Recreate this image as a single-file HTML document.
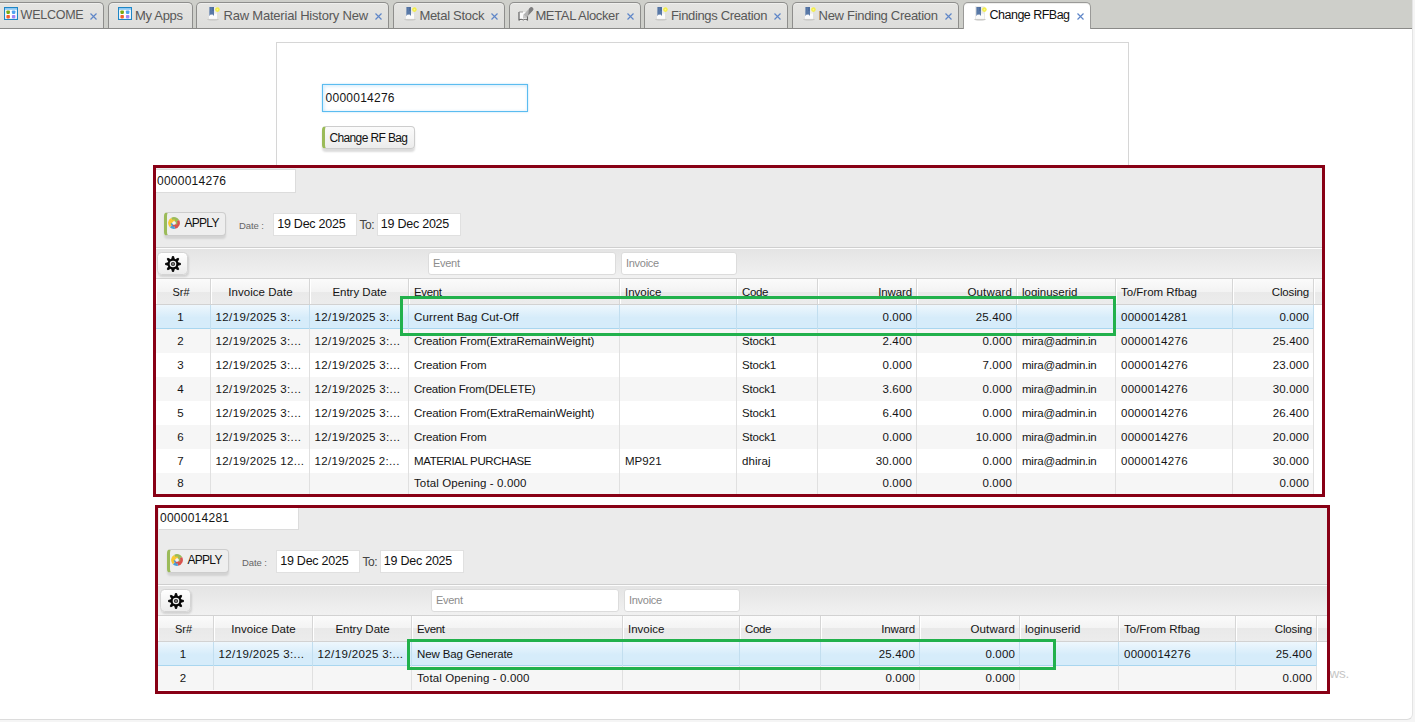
<!DOCTYPE html>
<html><head><meta charset="utf-8"><title>Change RFBag</title>
<style>
html,body{margin:0;padding:0}
body{width:1415px;height:722px;overflow:hidden;background:#f5f5f5;font-family:"Liberation Sans",sans-serif;font-size:12px;color:#141414;position:relative}
#page{position:absolute;left:0;top:0;width:1412px;height:719px;background:#fff;border-right:1px solid #e4e4e4;border-bottom:1px solid #dcdcdc;border-bottom-right-radius:6px;overflow:hidden;box-sizing:content-box}
#tabbar{position:absolute;left:0;top:0;width:1412px;height:28px;background:#cecfca;border-bottom:1px solid #8a8a88}
.tab{position:absolute;top:2px;height:26px;box-sizing:border-box;border:1px solid #8e8e8c;border-bottom:none;border-radius:5px 5px 0 0;background:linear-gradient(#e5e5e2,#dddddb);box-shadow:inset 0 1px 0 #efefed;color:#585858;font-size:13px;white-space:nowrap}
.tab.act{background:#fff;height:27px;color:#111;border-color:#9a9a98}
.tab .ti{position:absolute;left:9px;top:4px}
.tab .ti.doc{left:10px;top:3px}
.tab .ti.edit{left:8px;top:3px}
.tab .tl{position:absolute;top:5px;line-height:15px}
.tab .tx{position:absolute;right:6px;top:9.5px}
#formbox{position:absolute;left:276px;top:42px;width:851px;height:140px;border:1px solid #d6d6d6;background:#fff}
.rfin{position:absolute;left:45px;top:41px;width:201.4px;height:26px;border:1px solid #5bbcf0;box-shadow:inset 2px 2px 3px rgba(110,185,240,.22),inset -1px -1px 2px rgba(110,185,240,.12),0 0 2px rgba(91,188,240,.45);line-height:26px;padding-left:2.6px;box-sizing:content-box;letter-spacing:.24px}
.rfbtn{position:absolute;left:45px;top:82.6px;width:92.6px;height:23.8px;box-sizing:border-box;border:1px solid #cdcdcd;border-left:3.5px solid #9bbb59;border-radius:4px;background:linear-gradient(#fbfbfb,#ececec);box-shadow:0 3px 2px rgba(0,0,0,.14);line-height:23px;text-align:left;padding-left:4.4px;white-space:nowrap;letter-spacing:-0.62px;color:#111}
.panel{position:absolute;background:#ebebeb;overflow:hidden}
.pin{position:absolute;top:0;width:1166px;height:100%}
.bagin{position:absolute;left:0;top:1px;width:138px;height:22px;border:1px solid #dcdcdc;border-left:none;background:#fff;line-height:22px;padding-left:1px;letter-spacing:.25px;font-size:12px}
.apply{position:absolute;left:8px;top:44px;width:62.4px;height:24px;box-sizing:border-box;border:1px solid #cdcdcd;border-left:3.5px solid #9bbb59;border-radius:4px;background:#eeeeee;box-shadow:0 3px 2px rgba(0,0,0,.10)}
.apply .swirl{position:absolute;left:0.6px;top:4.2px}
.apply span{position:absolute;left:17.4px;top:-0.8px;line-height:22px;letter-spacing:-0.68px;color:#111}
.dlabel{position:absolute;left:83px;top:51.5px;font-size:9.5px;line-height:12px;color:#666;letter-spacing:-0.1px}
.tolabel{position:absolute;left:203.6px;top:49.5px;font-size:12px;line-height:14px;color:#444;letter-spacing:-0.5px}
.din{position:absolute;top:45px;width:83.6px;height:22.6px;background:#fff;border:1px solid #e0e0e0;box-sizing:border-box;line-height:20.4px;padding-left:3.2px;font-size:12.5px;letter-spacing:-0.24px;color:#111}
.d1{left:117px}.d2{left:220.6px;width:84.6px}
.sep{position:absolute;left:0;top:79px;width:100%;height:1px;background:#cfcfcf;border-bottom:1px solid #fdfdfd}
.toolbar{position:absolute;left:0;top:81px;width:100%;height:29px;background:linear-gradient(#e4e4e4,#f1f1f1)}
.gearbtn{position:absolute;left:0.6px;top:83.7px;width:31.5px;height:23.3px;box-sizing:border-box;border:1px solid #d4d4d4;border-radius:4.5px;background:linear-gradient(#ffffff,#ececec);box-shadow:1px 2px 2px rgba(0,0,0,.12)}
.gearbtn .gear{position:absolute;left:7.3px;top:2.9px}
.filt{position:absolute;top:83.8px;height:22.8px;box-sizing:border-box;border:1px solid #dcdcdc;border-radius:3px;background:#fff;color:#8c8c8c;line-height:20px;padding-left:4px;font-size:11px;letter-spacing:-0.28px}
.f1{left:272px;width:188px}.f2{left:465px;width:116px}
.hdr{position:absolute;left:0;top:110px;width:100%;height:27px;background:linear-gradient(#fbfbfb 0,#f3f3f3 50%,#e9e9e9 50%,#ececec 100%);border-top:1px solid #d2d2d2;border-bottom:1px solid #d2d2d2;box-sizing:border-box}
.hc{font-size:11.5px;position:absolute;top:0;height:25px;box-sizing:border-box;border-left:1px solid #fff;border-right:1px solid #d6d6d6;line-height:27px;white-space:nowrap;overflow:hidden}

.hc.al{text-align:left;padding-left:4px}
.c.al{text-align:left;padding-left:5px}
.c.dt{text-align:left;padding-left:4.6px}
.hc.ar,.c.ar{text-align:right;padding-right:4px}
.hc.ac,.c.ac{text-align:center}
.row{position:absolute;left:0;height:24px;background:#fff}
.p1 .row.last .c{line-height:21.6px}
.row.alt{background:#f6f6f6}
.row.sel{background:linear-gradient(#eef7fd 0,#d6ecfa 55%,#d6ecfa 100%);border-bottom:1px solid #a9d6ef;box-sizing:border-box}
.c{font-size:11.5px;position:absolute;top:0;height:24px;box-sizing:border-box;border-right:1px solid #e0e0e0;line-height:24px;white-space:nowrap;overflow:hidden}
.pb{position:absolute;border:3px solid #880015;box-sizing:border-box;pointer-events:none}
.pb1{left:153px;top:165px;width:1172px;height:332px}
.pb2{left:155px;top:505px;width:1175px;height:189px}
.gr{position:absolute;border:3px solid #22b14c;box-sizing:border-box}
.gr1{left:400px;top:296px;width:716px;height:40px}
.gr2{left:407px;top:639px;width:649px;height:31px}
.wm{position:absolute;left:1329.5px;top:665.5px;font-size:13.5px;color:#c6c6c6;letter-spacing:-0.2px}
.rowsbg{position:absolute;left:0;top:137px;width:100%;bottom:0;background:#fff}
.row.sel .c{border-right-color:#c2deef}

</style></head><body>
<div id="page">
<div id="tabbar">
<div class="tab" style="left:-6px;width:110px"><svg class="ti" viewBox="0 0 14 13" width="14" height="13"><rect x="0.5" y="0.5" width="13" height="12" fill="#fff" stroke="#1e86c5" stroke-width="1.2"/><rect x="1" y="1" width="12" height="1.8" fill="#8dc8f3"/><rect x="2.4" y="3.4" width="3.5" height="3.5" rx=".8" fill="#7cab12"/><rect x="7.9" y="3.4" width="3.5" height="3.5" rx=".8" fill="#4ea4ef"/><rect x="2.4" y="7.9" width="3.5" height="3.5" rx=".8" fill="#f1622f"/><rect x="7.9" y="7.9" width="3.5" height="3.5" rx=".8" fill="#a185f6"/></svg><span class="tl" style="left:25.6px;font-size:12.5px;letter-spacing:-0.25px">WELCOME</span><svg class="tx" viewBox="0 0 7 7" width="7" height="7"><path d="M0.5 0.5L6.5 6.5M6.5 0.5L0.5 6.5" stroke="#5f86c8" stroke-width="1.2" fill="none"/></svg></div>
<div class="tab" style="left:108px;width:85px"><svg class="ti" viewBox="0 0 14 13" width="14" height="13"><rect x="0.5" y="0.5" width="13" height="12" fill="#fff" stroke="#1e86c5" stroke-width="1.2"/><rect x="1" y="1" width="12" height="1.8" fill="#8dc8f3"/><rect x="2.4" y="3.4" width="3.5" height="3.5" rx=".8" fill="#7cab12"/><rect x="7.9" y="3.4" width="3.5" height="3.5" rx=".8" fill="#4ea4ef"/><rect x="2.4" y="7.9" width="3.5" height="3.5" rx=".8" fill="#f1622f"/><rect x="7.9" y="7.9" width="3.5" height="3.5" rx=".8" fill="#a185f6"/></svg><span class="tl" style="left:26.0px;letter-spacing:-0.31px">My Apps</span></div>
<div class="tab" style="left:196px;width:193px"><svg class="ti doc" viewBox="0 0 14 15" width="14" height="15"><ellipse cx="6" cy="13.6" rx="6" ry="0.9" fill="#c4c4c2"/><rect x="1.6" y="0.8" width="8.8" height="12.2" fill="#ececea" stroke="#dededc" stroke-width=".5"/><rect x="2" y="7.6" width="8" height="5.2" fill="#fbfbfb"/><path d="M2.4 1h4.6v8.9l-1.100-1.300h-2.400l-1.100 1.300z" fill="#4f6f9f"/><path d="M2.400 5h4.600v4.900l-1.100-1.300h-2.400l-1.100 1.300z" fill="#7291bb" opacity=".3"/><path d="M3.400 1.400h1.600v3.600h-1.600z" fill="#6483b3" opacity=".6"/><circle cx="10.4" cy="3.600" r="2.300" fill="#f3ee48"/><circle cx="10.4" cy="3.600" r="0.900" fill="#fbf88a"/></svg><span class="tl" style="left:26.6px;letter-spacing:-0.22px">Raw Material History New</span><svg class="tx" viewBox="0 0 7 7" width="7" height="7"><path d="M0.5 0.5L6.5 6.5M6.5 0.5L0.5 6.5" stroke="#5f86c8" stroke-width="1.2" fill="none"/></svg></div>
<div class="tab" style="left:393px;width:112px"><svg class="ti doc" viewBox="0 0 14 15" width="14" height="15"><ellipse cx="6" cy="13.6" rx="6" ry="0.9" fill="#c4c4c2"/><rect x="1.6" y="0.8" width="8.8" height="12.2" fill="#ececea" stroke="#dededc" stroke-width=".5"/><rect x="2" y="7.6" width="8" height="5.2" fill="#fbfbfb"/><path d="M2.4 1h4.6v8.9l-1.100-1.300h-2.400l-1.100 1.300z" fill="#4f6f9f"/><path d="M2.400 5h4.600v4.900l-1.100-1.300h-2.400l-1.100 1.300z" fill="#7291bb" opacity=".3"/><path d="M3.400 1.400h1.600v3.600h-1.600z" fill="#6483b3" opacity=".6"/><circle cx="10.4" cy="3.600" r="2.300" fill="#f3ee48"/><circle cx="10.4" cy="3.600" r="0.900" fill="#fbf88a"/></svg><span class="tl" style="left:25.4px;letter-spacing:-0.29px">Metal Stock</span><svg class="tx" viewBox="0 0 7 7" width="7" height="7"><path d="M0.5 0.5L6.5 6.5M6.5 0.5L0.5 6.5" stroke="#5f86c8" stroke-width="1.2" fill="none"/></svg></div>
<div class="tab" style="left:509px;width:132px"><svg class="ti edit" viewBox="0 0 16 15" width="16" height="15"><rect x="1" y="6" width="8.4" height="8.4" fill="#fbfbfb"/><path d="M1 6v8.6M9.4 9v5.6" stroke="#6a6a6a" stroke-width="1.3" fill="none"/><path d="M1 14c1.5-.9 2.8-.9 4.2 0c1.400-.9 2.800-.9 4.200 0" stroke="#555" stroke-width="1" fill="none"/><path d="M1 6h4" stroke="#888" stroke-width=".8"/><path d="M5.600 8.600l6.400-6.800a1.800 1.800 0 012.800 2.600l-6 6.800-3.600 1.200z" fill="#b4b4b4"/><path d="M11 2.800l1-1a1.800 1.800 0 012.800 2.600l-4.600 5.200z" fill="#7e7e7e"/><path d="M5.600 8.600l3.200 2.600-3.600 1.200z" fill="#c9c9c9"/></svg><span class="tl" style="left:25.4px;letter-spacing:-0.35px">METAL Alocker</span><svg class="tx" viewBox="0 0 7 7" width="7" height="7"><path d="M0.5 0.5L6.5 6.5M6.5 0.5L0.5 6.5" stroke="#5f86c8" stroke-width="1.2" fill="none"/></svg></div>
<div class="tab" style="left:644px;width:144px"><svg class="ti doc" viewBox="0 0 14 15" width="14" height="15"><ellipse cx="6" cy="13.6" rx="6" ry="0.9" fill="#c4c4c2"/><rect x="1.6" y="0.8" width="8.8" height="12.2" fill="#ececea" stroke="#dededc" stroke-width=".5"/><rect x="2" y="7.6" width="8" height="5.2" fill="#fbfbfb"/><path d="M2.4 1h4.6v8.9l-1.100-1.300h-2.400l-1.100 1.300z" fill="#4f6f9f"/><path d="M2.400 5h4.600v4.900l-1.100-1.300h-2.400l-1.100 1.300z" fill="#7291bb" opacity=".3"/><path d="M3.400 1.400h1.600v3.600h-1.600z" fill="#6483b3" opacity=".6"/><circle cx="10.4" cy="3.600" r="2.300" fill="#f3ee48"/><circle cx="10.4" cy="3.600" r="0.900" fill="#fbf88a"/></svg><span class="tl" style="left:26.0px;letter-spacing:-0.34px">Findings Creation</span><svg class="tx" viewBox="0 0 7 7" width="7" height="7"><path d="M0.5 0.5L6.5 6.5M6.5 0.5L0.5 6.5" stroke="#5f86c8" stroke-width="1.2" fill="none"/></svg></div>
<div class="tab" style="left:792px;width:167px"><svg class="ti doc" viewBox="0 0 14 15" width="14" height="15"><ellipse cx="6" cy="13.6" rx="6" ry="0.9" fill="#c4c4c2"/><rect x="1.6" y="0.8" width="8.8" height="12.2" fill="#ececea" stroke="#dededc" stroke-width=".5"/><rect x="2" y="7.6" width="8" height="5.2" fill="#fbfbfb"/><path d="M2.4 1h4.6v8.9l-1.100-1.300h-2.400l-1.100 1.300z" fill="#4f6f9f"/><path d="M2.400 5h4.600v4.900l-1.100-1.300h-2.400l-1.100 1.300z" fill="#7291bb" opacity=".3"/><path d="M3.400 1.400h1.600v3.600h-1.600z" fill="#6483b3" opacity=".6"/><circle cx="10.4" cy="3.600" r="2.300" fill="#f3ee48"/><circle cx="10.4" cy="3.600" r="0.900" fill="#fbf88a"/></svg><span class="tl" style="left:25.6px;letter-spacing:-0.30px">New Finding Creation</span><svg class="tx" viewBox="0 0 7 7" width="7" height="7"><path d="M0.5 0.5L6.5 6.5M6.5 0.5L0.5 6.5" stroke="#5f86c8" stroke-width="1.2" fill="none"/></svg></div>
<div class="tab act" style="left:963px;width:128px"><svg class="ti doc" viewBox="0 0 14 15" width="14" height="15"><ellipse cx="6" cy="13.6" rx="6" ry="0.9" fill="#c4c4c2"/><rect x="1.6" y="0.8" width="8.8" height="12.2" fill="#ececea" stroke="#dededc" stroke-width=".5"/><rect x="2" y="7.6" width="8" height="5.2" fill="#fbfbfb"/><path d="M2.4 1h4.6v8.9l-1.100-1.300h-2.400l-1.100 1.300z" fill="#4f6f9f"/><path d="M2.400 5h4.600v4.900l-1.100-1.300h-2.400l-1.100 1.300z" fill="#7291bb" opacity=".3"/><path d="M3.400 1.400h1.600v3.600h-1.600z" fill="#6483b3" opacity=".6"/><circle cx="10.4" cy="3.600" r="2.300" fill="#f3ee48"/><circle cx="10.4" cy="3.600" r="0.900" fill="#fbf88a"/></svg><span class="tl" style="left:25.6px;font-size:12.5px;letter-spacing:-0.52px">Change RFBag</span><svg class="tx" viewBox="0 0 7 7" width="7" height="7"><path d="M0.5 0.5L6.5 6.5M6.5 0.5L0.5 6.5" stroke="#5f86c8" stroke-width="1.2" fill="none"/></svg></div>
</div>
<div id="formbox">
<div class="rfin">0000014276</div>
<div class="rfbtn">Change RF Bag</div>
</div>
<div class="panel p1" style="left:156px;top:168px;width:1166px;height:326px">
<div class="sep"></div>
<div class="toolbar"></div>
<div class="pin" style="left:0px">
<div class="bagin">0000014276</div>
<div class="apply"><svg class="swirl" viewBox="0 0 12 12" width="12" height="12"><g fill="none" stroke-width="4"><path d="M4.05 2.62A3.9 3.9 0 0 1 9.38 4.05" stroke="#9bbb59"/><path d="M9.38 4.05A3.9 3.9 0 0 1 6.68 9.84" stroke="#d9534f"/><path d="M6.68 9.84A3.9 3.9 0 0 1 3.24 8.76" stroke="#4a9fd8"/><path d="M3.24 8.76A3.9 3.9 0 0 1 4.05 2.62" stroke="#f8c832"/><path d="M7.99 4.33A2.6 2.6 0 0 1 8.25 7.30" stroke="#9bbb59" stroke-width="1.6"/><path d="M7.30 8.25A2.6 2.6 0 0 1 4.33 7.99" stroke="#d9534f" stroke-width="1.6"/><path d="M4.70 8.25A2.6 2.6 0 0 1 3.41 6.23" stroke="#4a9fd8" stroke-width="1.6"/><path d="M3.56 5.11A2.6 2.6 0 0 1 6.89 3.56" stroke="#f8c832" stroke-width="1.6"/></g><circle cx="6.1" cy="6" r="1.500" fill="#f4f4f4"/></svg><span>APPLY</span></div>
<div class="dlabel">Date :</div>
<div class="din d1">19 Dec 2025</div>
<div class="tolabel">To:</div>
<div class="din d2">19 Dec 2025</div>
<div class="gearbtn"><svg class="gear" viewBox="0 0 16 16" width="16" height="16"><path d="M6.57 3.31L7.46 0.22L8.54 0.22L9.43 3.31L10.30 3.67L13.12 2.11L13.89 2.88L12.33 5.70L12.69 6.57L15.78 7.46L15.78 8.54L12.69 9.43L12.33 10.30L13.89 13.12L13.12 13.89L10.30 12.33L9.43 12.69L8.54 15.78L7.46 15.78L6.57 12.69L5.70 12.33L2.88 13.89L2.11 13.12L3.67 10.30L3.31 9.43L0.22 8.54L0.22 7.46L3.31 6.57L3.67 5.70L2.11 2.88L2.88 2.11L5.70 3.67z" fill="#050505" stroke="#050505" stroke-width="0.8" stroke-linejoin="round"/><circle cx="8" cy="8" r="5.2" fill="#050505"/><circle cx="8" cy="8" r="3.3" fill="#f2f2f2"/><circle cx="8" cy="8" r="2.1" fill="#2a2a2a"/><circle cx="8" cy="8" r="1.2" fill="#777"/></svg></div>
<div class="filt f1">Event</div>
<div class="filt f2">Invoice</div>
</div>
<div class="hdr">
<div class="hc ac" style="left:0px;width:55px;padding-right:5px"><span style="font-size:11px;letter-spacing:-0.06px">Sr#</span></div>
<div class="hc ac" style="left:55px;width:99px"><span style="letter-spacing:0.04px">Invoice Date</span></div>
<div class="hc ac" style="left:154px;width:99px"><span style="letter-spacing:-0.01px">Entry Date</span></div>
<div class="hc al" style="left:253px;width:211px"><span style="letter-spacing:-0.36px">Event</span></div>
<div class="hc al" style="left:464px;width:117px"><span style="letter-spacing:-0.01px">Invoice</span></div>
<div class="hc al" style="left:581px;width:81px"><span style="letter-spacing:-0.37px">Code</span></div>
<div class="hc ar" style="left:662px;width:99px"><span style="letter-spacing:-0.11px">Inward</span></div>
<div class="hc ar" style="left:761px;width:100px"><span style="letter-spacing:0.16px">Outward</span></div>
<div class="hc al" style="left:861px;width:99px"><span style="letter-spacing:-0.02px">loginuserid</span></div>
<div class="hc al" style="left:960px;width:117px"><span style="letter-spacing:-0.01px">To/From Rfbag</span></div>
<div class="hc ar" style="left:1077px;width:81px"><span style="letter-spacing:-0.16px">Closing</span></div>
<div class="hc" style="left:1158px;width:8px;border-right:none"></div>
</div>
<div class="rowsbg"></div>
<div class="row sel" style="top:137px;width:1158px">
<div class="c ac" style="left:0px;width:55px;padding-right:5px"><span>1</span></div>
<div class="c ax dt" style="left:55px;width:99px"><span style="letter-spacing:0.36px">12/19/2025 3:...</span></div>
<div class="c ax dt" style="left:154px;width:99px"><span style="letter-spacing:0.36px">12/19/2025 3:...</span></div>
<div class="c al" style="left:253px;width:211px"><span style="letter-spacing:0.14px">Current Bag Cut-Off</span></div>
<div class="c al" style="left:464px;width:117px"></div>
<div class="c al" style="left:581px;width:81px"></div>
<div class="c ar" style="left:662px;width:99px"><span style="letter-spacing:0.15px">0.000</span></div>
<div class="c ar" style="left:761px;width:100px"><span style="letter-spacing:0.20px">25.400</span></div>
<div class="c al" style="left:861px;width:99px"></div>
<div class="c al" style="left:960px;width:117px"><span style="letter-spacing:0.27px">0000014281</span></div>
<div class="c ar" style="left:1077px;width:81px"><span style="letter-spacing:0.15px">0.000</span></div>
</div>
<div class="row alt" style="top:161px;width:1158px">
<div class="c ac" style="left:0px;width:55px;padding-right:5px"><span>2</span></div>
<div class="c ax dt" style="left:55px;width:99px"><span style="letter-spacing:0.36px">12/19/2025 3:...</span></div>
<div class="c ax dt" style="left:154px;width:99px"><span style="letter-spacing:0.36px">12/19/2025 3:...</span></div>
<div class="c al" style="left:253px;width:211px"><span style="letter-spacing:-0.09px">Creation From(ExtraRemainWeight)</span></div>
<div class="c al" style="left:464px;width:117px"></div>
<div class="c al" style="left:581px;width:81px"><span style="letter-spacing:-0.19px">Stock1</span></div>
<div class="c ar" style="left:662px;width:99px"><span style="letter-spacing:0.15px">2.400</span></div>
<div class="c ar" style="left:761px;width:100px"><span style="letter-spacing:0.15px">0.000</span></div>
<div class="c al" style="left:861px;width:99px"><span style="letter-spacing:-0.23px">mira@admin.in</span></div>
<div class="c al" style="left:960px;width:117px"><span style="letter-spacing:0.29px">0000014276</span></div>
<div class="c ar" style="left:1077px;width:81px"><span style="letter-spacing:0.20px">25.400</span></div>
</div>
<div class="row" style="top:185px;width:1158px">
<div class="c ac" style="left:0px;width:55px;padding-right:5px"><span>3</span></div>
<div class="c ax dt" style="left:55px;width:99px"><span style="letter-spacing:0.36px">12/19/2025 3:...</span></div>
<div class="c ax dt" style="left:154px;width:99px"><span style="letter-spacing:0.36px">12/19/2025 3:...</span></div>
<div class="c al" style="left:253px;width:211px"><span style="letter-spacing:-0.08px">Creation From</span></div>
<div class="c al" style="left:464px;width:117px"></div>
<div class="c al" style="left:581px;width:81px"><span style="letter-spacing:-0.19px">Stock1</span></div>
<div class="c ar" style="left:662px;width:99px"><span style="letter-spacing:0.15px">0.000</span></div>
<div class="c ar" style="left:761px;width:100px"><span style="letter-spacing:0.15px">7.000</span></div>
<div class="c al" style="left:861px;width:99px"><span style="letter-spacing:-0.23px">mira@admin.in</span></div>
<div class="c al" style="left:960px;width:117px"><span style="letter-spacing:0.29px">0000014276</span></div>
<div class="c ar" style="left:1077px;width:81px"><span style="letter-spacing:0.20px">23.000</span></div>
</div>
<div class="row alt" style="top:209px;width:1158px">
<div class="c ac" style="left:0px;width:55px;padding-right:5px"><span>4</span></div>
<div class="c ax dt" style="left:55px;width:99px"><span style="letter-spacing:0.36px">12/19/2025 3:...</span></div>
<div class="c ax dt" style="left:154px;width:99px"><span style="letter-spacing:0.36px">12/19/2025 3:...</span></div>
<div class="c al" style="left:253px;width:211px"><span style="letter-spacing:-0.22px">Creation From(DELETE)</span></div>
<div class="c al" style="left:464px;width:117px"></div>
<div class="c al" style="left:581px;width:81px"><span style="letter-spacing:-0.19px">Stock1</span></div>
<div class="c ar" style="left:662px;width:99px"><span style="letter-spacing:0.15px">3.600</span></div>
<div class="c ar" style="left:761px;width:100px"><span style="letter-spacing:0.15px">0.000</span></div>
<div class="c al" style="left:861px;width:99px"><span style="letter-spacing:-0.23px">mira@admin.in</span></div>
<div class="c al" style="left:960px;width:117px"><span style="letter-spacing:0.29px">0000014276</span></div>
<div class="c ar" style="left:1077px;width:81px"><span style="letter-spacing:0.20px">30.000</span></div>
</div>
<div class="row" style="top:233px;width:1158px">
<div class="c ac" style="left:0px;width:55px;padding-right:5px"><span>5</span></div>
<div class="c ax dt" style="left:55px;width:99px"><span style="letter-spacing:0.36px">12/19/2025 3:...</span></div>
<div class="c ax dt" style="left:154px;width:99px"><span style="letter-spacing:0.36px">12/19/2025 3:...</span></div>
<div class="c al" style="left:253px;width:211px"><span style="letter-spacing:-0.09px">Creation From(ExtraRemainWeight)</span></div>
<div class="c al" style="left:464px;width:117px"></div>
<div class="c al" style="left:581px;width:81px"><span style="letter-spacing:-0.19px">Stock1</span></div>
<div class="c ar" style="left:662px;width:99px"><span style="letter-spacing:0.15px">6.400</span></div>
<div class="c ar" style="left:761px;width:100px"><span style="letter-spacing:0.15px">0.000</span></div>
<div class="c al" style="left:861px;width:99px"><span style="letter-spacing:-0.23px">mira@admin.in</span></div>
<div class="c al" style="left:960px;width:117px"><span style="letter-spacing:0.29px">0000014276</span></div>
<div class="c ar" style="left:1077px;width:81px"><span style="letter-spacing:0.20px">26.400</span></div>
</div>
<div class="row alt" style="top:257px;width:1158px">
<div class="c ac" style="left:0px;width:55px;padding-right:5px"><span>6</span></div>
<div class="c ax dt" style="left:55px;width:99px"><span style="letter-spacing:0.36px">12/19/2025 3:...</span></div>
<div class="c ax dt" style="left:154px;width:99px"><span style="letter-spacing:0.36px">12/19/2025 3:...</span></div>
<div class="c al" style="left:253px;width:211px"><span style="letter-spacing:-0.08px">Creation From</span></div>
<div class="c al" style="left:464px;width:117px"></div>
<div class="c al" style="left:581px;width:81px"><span style="letter-spacing:-0.19px">Stock1</span></div>
<div class="c ar" style="left:662px;width:99px"><span style="letter-spacing:0.15px">0.000</span></div>
<div class="c ar" style="left:761px;width:100px"><span style="letter-spacing:0.20px">10.000</span></div>
<div class="c al" style="left:861px;width:99px"><span style="letter-spacing:-0.23px">mira@admin.in</span></div>
<div class="c al" style="left:960px;width:117px"><span style="letter-spacing:0.29px">0000014276</span></div>
<div class="c ar" style="left:1077px;width:81px"><span style="letter-spacing:0.20px">20.000</span></div>
</div>
<div class="row" style="top:281px;width:1158px">
<div class="c ac" style="left:0px;width:55px;padding-right:5px"><span>7</span></div>
<div class="c ax dt" style="left:55px;width:99px"><span style="letter-spacing:0.35px">12/19/2025 12...</span></div>
<div class="c ax dt" style="left:154px;width:99px"><span style="letter-spacing:0.32px">12/19/2025 2:...</span></div>
<div class="c al" style="left:253px;width:211px"><span style="letter-spacing:-0.37px">MATERIAL PURCHASE</span></div>
<div class="c al" style="left:464px;width:117px"><span style="letter-spacing:0.04px">MP921</span></div>
<div class="c al" style="left:581px;width:81px"><span style="letter-spacing:0.07px">dhiraj</span></div>
<div class="c ar" style="left:662px;width:99px"><span style="letter-spacing:0.20px">30.000</span></div>
<div class="c ar" style="left:761px;width:100px"><span style="letter-spacing:0.15px">0.000</span></div>
<div class="c al" style="left:861px;width:99px"><span style="letter-spacing:-0.23px">mira@admin.in</span></div>
<div class="c al" style="left:960px;width:117px"><span style="letter-spacing:0.29px">0000014276</span></div>
<div class="c ar" style="left:1077px;width:81px"><span style="letter-spacing:0.20px">30.000</span></div>
</div>
<div class="row alt last" style="top:305px;width:1158px">
<div class="c ac" style="left:0px;width:55px;padding-right:5px"><span>8</span></div>
<div class="c ax dt" style="left:55px;width:99px"></div>
<div class="c ax dt" style="left:154px;width:99px"></div>
<div class="c al" style="left:253px;width:211px"><span style="letter-spacing:0.12px">Total Opening - 0.000</span></div>
<div class="c al" style="left:464px;width:117px"></div>
<div class="c al" style="left:581px;width:81px"></div>
<div class="c ar" style="left:662px;width:99px"><span style="letter-spacing:0.15px">0.000</span></div>
<div class="c ar" style="left:761px;width:100px"><span style="letter-spacing:0.15px">0.000</span></div>
<div class="c al" style="left:861px;width:99px"></div>
<div class="c al" style="left:960px;width:117px"></div>
<div class="c ar" style="left:1077px;width:81px"><span style="letter-spacing:0.15px">0.000</span></div>
</div>
</div>
<div class="pb pb1"></div>
<div class="wm">ws.</div>
<div class="panel p2" style="left:158px;top:505px;width:1169px;height:186px">
<div class="sep"></div>
<div class="toolbar"></div>
<div class="pin" style="left:1px">
<div class="bagin">0000014281</div>
<div class="apply"><svg class="swirl" viewBox="0 0 12 12" width="12" height="12"><g fill="none" stroke-width="4"><path d="M4.05 2.62A3.9 3.9 0 0 1 9.38 4.05" stroke="#9bbb59"/><path d="M9.38 4.05A3.9 3.9 0 0 1 6.68 9.84" stroke="#d9534f"/><path d="M6.68 9.84A3.9 3.9 0 0 1 3.24 8.76" stroke="#4a9fd8"/><path d="M3.24 8.76A3.9 3.9 0 0 1 4.05 2.62" stroke="#f8c832"/><path d="M7.99 4.33A2.6 2.6 0 0 1 8.25 7.30" stroke="#9bbb59" stroke-width="1.6"/><path d="M7.30 8.25A2.6 2.6 0 0 1 4.33 7.99" stroke="#d9534f" stroke-width="1.6"/><path d="M4.70 8.25A2.6 2.6 0 0 1 3.41 6.23" stroke="#4a9fd8" stroke-width="1.6"/><path d="M3.56 5.11A2.6 2.6 0 0 1 6.89 3.56" stroke="#f8c832" stroke-width="1.6"/></g><circle cx="6.1" cy="6" r="1.500" fill="#f4f4f4"/></svg><span>APPLY</span></div>
<div class="dlabel">Date :</div>
<div class="din d1">19 Dec 2025</div>
<div class="tolabel">To:</div>
<div class="din d2">19 Dec 2025</div>
<div class="gearbtn"><svg class="gear" viewBox="0 0 16 16" width="16" height="16"><path d="M6.57 3.31L7.46 0.22L8.54 0.22L9.43 3.31L10.30 3.67L13.12 2.11L13.89 2.88L12.33 5.70L12.69 6.57L15.78 7.46L15.78 8.54L12.69 9.43L12.33 10.30L13.89 13.12L13.12 13.89L10.30 12.33L9.43 12.69L8.54 15.78L7.46 15.78L6.57 12.69L5.70 12.33L2.88 13.89L2.11 13.12L3.67 10.30L3.31 9.43L0.22 8.54L0.22 7.46L3.31 6.57L3.67 5.70L2.11 2.88L2.88 2.11L5.70 3.67z" fill="#050505" stroke="#050505" stroke-width="0.8" stroke-linejoin="round"/><circle cx="8" cy="8" r="5.2" fill="#050505"/><circle cx="8" cy="8" r="3.3" fill="#f2f2f2"/><circle cx="8" cy="8" r="2.1" fill="#2a2a2a"/><circle cx="8" cy="8" r="1.2" fill="#777"/></svg></div>
<div class="filt f1">Event</div>
<div class="filt f2">Invoice</div>
</div>
<div class="hdr">
<div class="hc ac" style="left:0px;width:56px;padding-right:5px"><span style="font-size:11px;letter-spacing:-0.06px">Sr#</span></div>
<div class="hc ac" style="left:56px;width:99px"><span style="letter-spacing:0.04px">Invoice Date</span></div>
<div class="hc ac" style="left:155px;width:99px"><span style="letter-spacing:-0.01px">Entry Date</span></div>
<div class="hc al" style="left:254px;width:211px"><span style="letter-spacing:-0.36px">Event</span></div>
<div class="hc al" style="left:465px;width:117px"><span style="letter-spacing:-0.01px">Invoice</span></div>
<div class="hc al" style="left:582px;width:81px"><span style="letter-spacing:-0.37px">Code</span></div>
<div class="hc ar" style="left:663px;width:99px"><span style="letter-spacing:-0.11px">Inward</span></div>
<div class="hc ar" style="left:762px;width:100px"><span style="letter-spacing:0.16px">Outward</span></div>
<div class="hc al" style="left:862px;width:99px"><span style="letter-spacing:-0.02px">loginuserid</span></div>
<div class="hc al" style="left:961px;width:117px"><span style="letter-spacing:-0.01px">To/From Rfbag</span></div>
<div class="hc ar" style="left:1078px;width:81px"><span style="letter-spacing:-0.16px">Closing</span></div>
<div class="hc" style="left:1159px;width:10px;border-right:none"></div>
</div>
<div class="rowsbg"></div>
<div class="row sel" style="top:137px;width:1159px">
<div class="c ac" style="left:0px;width:56px;padding-right:5px"><span>1</span></div>
<div class="c ax dt" style="left:56px;width:99px"><span style="letter-spacing:0.36px">12/19/2025 3:...</span></div>
<div class="c ax dt" style="left:155px;width:99px"><span style="letter-spacing:0.36px">12/19/2025 3:...</span></div>
<div class="c al" style="left:254px;width:211px"><span style="letter-spacing:-0.12px">New Bag Generate</span></div>
<div class="c al" style="left:465px;width:117px"></div>
<div class="c al" style="left:582px;width:81px"></div>
<div class="c ar" style="left:663px;width:99px"><span style="letter-spacing:0.20px">25.400</span></div>
<div class="c ar" style="left:762px;width:100px"><span style="letter-spacing:0.15px">0.000</span></div>
<div class="c al" style="left:862px;width:99px"></div>
<div class="c al" style="left:961px;width:117px"><span style="letter-spacing:0.29px">0000014276</span></div>
<div class="c ar" style="left:1078px;width:81px"><span style="letter-spacing:0.20px">25.400</span></div>
</div>
<div class="row alt last" style="top:161px;width:1159px">
<div class="c ac" style="left:0px;width:56px;padding-right:5px"><span>2</span></div>
<div class="c ax dt" style="left:56px;width:99px"></div>
<div class="c ax dt" style="left:155px;width:99px"></div>
<div class="c al" style="left:254px;width:211px"><span style="letter-spacing:0.12px">Total Opening - 0.000</span></div>
<div class="c al" style="left:465px;width:117px"></div>
<div class="c al" style="left:582px;width:81px"></div>
<div class="c ar" style="left:663px;width:99px"><span style="letter-spacing:0.15px">0.000</span></div>
<div class="c ar" style="left:762px;width:100px"><span style="letter-spacing:0.15px">0.000</span></div>
<div class="c al" style="left:862px;width:99px"></div>
<div class="c al" style="left:961px;width:117px"></div>
<div class="c ar" style="left:1078px;width:81px"><span style="letter-spacing:0.15px">0.000</span></div>
</div>
</div>
<div class="pb pb2"></div>
<div class="gr gr1"></div>
<div class="gr gr2"></div>
</div>
</body></html>
